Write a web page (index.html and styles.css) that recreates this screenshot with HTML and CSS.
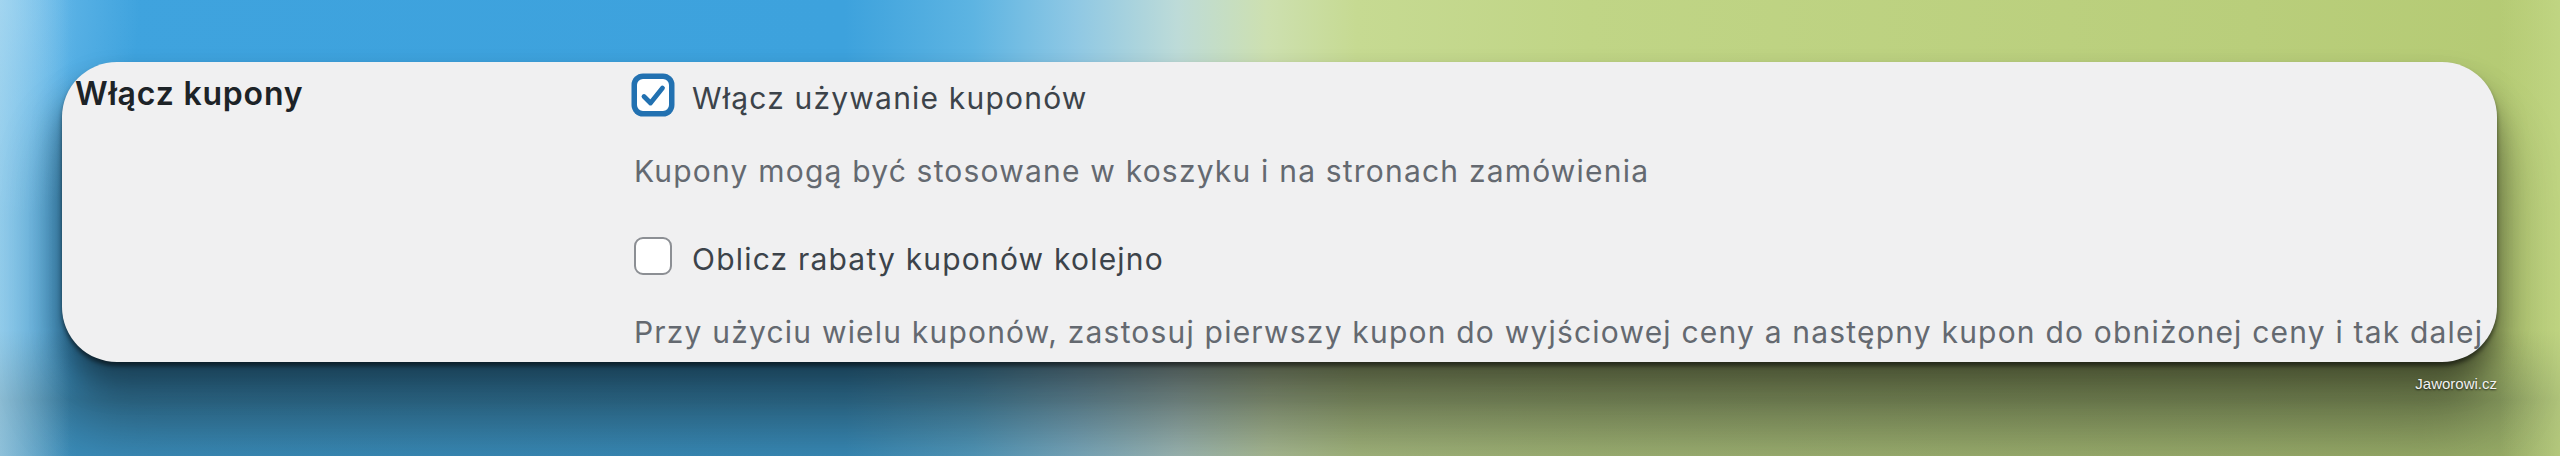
FILE: index.html
```html
<!DOCTYPE html>
<html lang="pl">
<head>
<meta charset="utf-8">
<title>Włącz kupony</title>
<link rel="stylesheet" href="styles.css">
</head>
<body>
<main class="stage">
  <section class="card">
    <div class="field-label">Włącz kupony</div>
    <div class="field-body">
      <label class="check">
        <span class="box is-checked">
          <svg viewBox="0 0 38 38" width="38" height="38" aria-hidden="true"><path d="M10 20.5 L16.5 27 L28.5 12" fill="none" stroke="#2271b1" stroke-width="4.8" stroke-linecap="round" stroke-linejoin="round"/></svg>
        </span>
        <span class="check-text">Włącz używanie kuponów</span>
      </label>
      <p class="desc">Kupony mogą być stosowane w koszyku i na stronach zamówienia</p>
      <label class="check check-second">
        <span class="box"></span>
        <span class="check-text">Oblicz rabaty kuponów kolejno</span>
      </label>
      <p class="desc">Przy użyciu wielu kuponów, zastosuj pierwszy kupon do wyjściowej ceny a następny kupon do obniżonej ceny i tak dalej.</p>
    </div>
  </section>
  <div class="credit">Jaworowi.cz</div>
</main>
</body>
</html>
```
FILE: styles.css
```css
html, body {
  margin: 0;
  padding: 0;
}

body {
  width: 2560px;
  height: 456px;
  overflow: hidden;
  font-family: Inter, "Noto Sans", sans-serif;
  background:
    linear-gradient(90deg, rgba(190, 225, 240, 0.55) 0, rgba(190, 225, 240, 0) 70px),
    linear-gradient(270deg, rgba(200, 220, 140, 0.6) 0, rgba(200, 220, 140, 0) 60px),
    radial-gradient(ellipse 140px 220px at 0 0, rgba(150, 210, 245, 0.6), transparent),
    linear-gradient(180deg, rgba(40, 55, 50, 0) 0, rgba(40, 55, 50, 0) 330px, rgba(40, 55, 50, 0.3) 400px, rgba(40, 55, 50, 0.22) 456px),
    linear-gradient(90deg, #5fb4e6 0%, #3fa3de 3%, #3da2dd 33%, #5db4e2 38%, #8fc8e4 42%, #bddbd8 46%, #cde0b0 49.5%, #c6da92 53%, #c0d586 62%, #b9ce7b 88%, #b4ca73 100%);
}

.stage {
  padding: 62px 63px 0 62px;
  width: 2435px;
}

/* settings panel */
.card {
  display: flex;
  height: 300px;
  box-sizing: border-box;
  padding: 12px 0 0 13px;
  background: #f0f0f1;
  border-radius: 55px;
  overflow: hidden;
  box-shadow:
    0 4px 4px rgba(0, 0, 0, 0.5),
    0 20px 30px rgba(0, 0, 0, 0.4),
    0 60px 60px 6px rgba(0, 0, 0, 0.3);
}

.field-label {
  flex: 0 0 559px;
  font-size: 32px;
  font-weight: 600;
  line-height: 40px;
  letter-spacing: 0.8px;
  color: #1d2327;
}

.field-body {
  padding-top: 4px;
  white-space: nowrap;
}

.check {
  display: flex;
  align-items: flex-start;
  height: 40px;
  font-size: 30px;
  line-height: 40px;
  letter-spacing: 1.2px;
  color: #3c434a;
}

.check-second {
  margin-top: 48px;
}

.box {
  flex: 0 0 38px;
  width: 38px;
  height: 38px;
  box-sizing: border-box;
  margin-top: -2px;
  margin-right: 20px;
  border: 2.5px solid #8c8f94;
  border-radius: 9px;
  background: #fff;
  position: relative;
}

.box.is-checked {
  border: 3px solid #2271b1;
  box-shadow: 0 0 0 2.5px #2271b1;
}

.box svg {
  position: absolute;
  left: -3px;
  top: -3px;
}

.desc {
  margin: 33px 0 0;
  font-size: 30px;
  line-height: 40px;
  letter-spacing: 1.2px;
  color: #646970;
}

.credit {
  margin-top: 13px;
  text-align: right;
  font-family: "Liberation Sans", Arial, sans-serif;
  font-size: 15px;
  line-height: 18px;
  color: #f2f2f2;
  text-shadow: 0 1px 2px rgba(0, 0, 0, 0.7);
}
```
